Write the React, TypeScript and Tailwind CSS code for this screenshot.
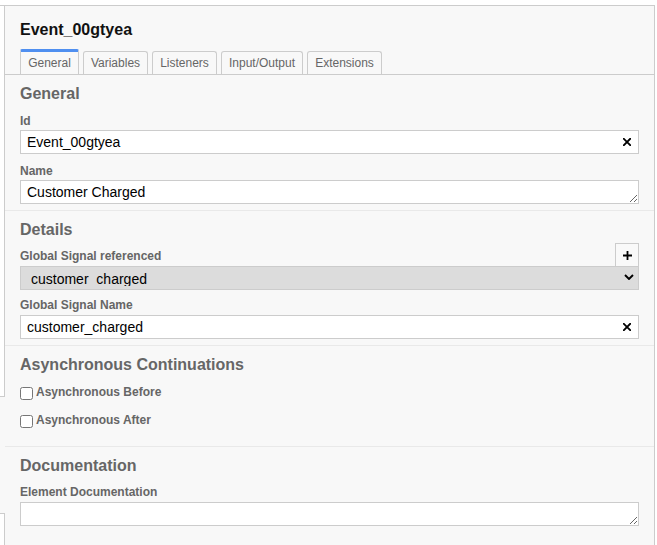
import React from "react";

const Label = ({ children, className = "" }: { children: React.ReactNode; className?: string }) => (
  <div className={"text-[12px] leading-[15px] font-bold text-[#666] " + className}>{children}</div>
);

const GroupTitle = ({ children }: { children: React.ReactNode }) => (
  <div className="text-[16px] leading-[20px] font-bold text-[#666]">{children}</div>
);

const XIcon = () => (
  <svg width="8" height="8" viewBox="0 0 8 8">
    <path d="M0.8 0.8 L7.2 7.2 M7.2 0.8 L0.8 7.2" stroke="#000" strokeWidth="1.9" strokeLinecap="square" />
  </svg>
);

const TextInput = ({ value }: { value: string }) => (
  <div className="relative h-[24px]">
    <input
      readOnly
      value={value}
      className="block w-full h-[24px] border border-[#ccc] bg-white pl-[6px] pr-[28px] text-[14px] text-black outline-none"
    />
    <div className="absolute right-0 top-0 w-[24px] h-[24px] flex items-center justify-center">
      <XIcon />
    </div>
  </div>
);

const TextArea = ({ value }: { value: string }) => (
  <textarea
    readOnly
    value={value}
    rows={1}
    className="block w-full h-[24px] border border-[#ccc] bg-white px-[6px] pt-[3px] pb-0 text-[14px] leading-[16px] text-black outline-none resize-y"
  />
);

const tabs = [
  { name: "General", w: "w-[59px]", active: true },
  { name: "Variables", w: "w-[65px]", active: false },
  { name: "Listeners", w: "w-[65px]", active: false },
  { name: "Input/Output", w: "w-[82px]", active: false },
  { name: "Extensions", w: "w-[75px]", active: false },
];

export default function App() {
  return (
    <div className="w-[657px] h-[545px] bg-white pt-[5px] overflow-hidden font-['Liberation_Sans',Arial,sans-serif]">
      <div className="flex w-[655px] h-[540px] border-t border-[#ccc]">
        {/* left strip (canvas elements peeking) */}
        <div className="w-[5px] flex flex-col bg-[#f8f8f8]">
          <div className="h-[391px] bg-white border-r border-b border-[#ccc]" />
          <div className="flex-1" />
          <div className="h-[32px] bg-white border-t border-r border-[#ccc]" />
        </div>

        {/* properties panel */}
        <div className="flex-1 bg-[#f8f8f8] border-r border-[#ccc] flex flex-col">
          {/* header */}
          <div className="px-[15px] pt-[14px]">
            <div className="text-[16px] leading-[20px] font-bold text-[#111]">Event_00gtyea</div>
          </div>
          <div className="mt-[9px] px-[15px] flex items-end gap-[4px] border-b border-[#ccc]">
            {tabs.map((t) =>
              t.active ? (
                <div
                  key={t.name}
                  className={t.w + " h-[25px] border-t-[3px] border-t-[#4f8ff0] border-x border-x-[#ccc] rounded-t-[2px] text-center text-[12px] leading-[22px] text-[#666]"}
                >
                  {t.name}
                </div>
              ) : (
                <div
                  key={t.name}
                  className={t.w + " h-[23px] border-t border-x border-[#ccc] rounded-t-[3px] text-center text-[12px] leading-[22px] text-[#666]"}
                >
                  {t.name}
                </div>
              )
            )}
          </div>

          {/* General */}
          <div className="px-[15px] pt-[9px] pb-[6px]">
            <GroupTitle>General</GroupTitle>
            <Label className="mt-[10px]">Id</Label>
            <div className="mt-[1px]">
              <TextInput value="Event_00gtyea" />
            </div>
            <Label className="mt-[10px]">Name</Label>
            <div className="mt-[1px]">
              <TextArea value="Customer Charged" />
            </div>
          </div>

          {/* Details */}
          <div className="px-[15px] pt-[9px] pb-[6px] border-t border-[#e9e9e9]">
            <GroupTitle>Details</GroupTitle>
            <div className="relative mt-[9px]">
              <Label>Global Signal referenced</Label>
              <div className="absolute right-0 top-[-6px] w-[24px] h-[24px] border border-[#ccc] bg-[#f9f9f9] flex items-center justify-center z-10">
                <svg width="9" height="9" viewBox="0 0 9 9">
                  <path d="M4.5 0 V9 M0 4.5 H9" stroke="#000" strokeWidth="1.8" />
                </svg>
              </div>
            </div>
            <div className="relative mt-[2px] h-[24px] border border-[#ccc] bg-[#dcdcdc]">
              <div className="h-[19px] overflow-hidden pl-[10px] text-[14px] leading-[24px] text-black">
                customer_charged
              </div>
              <div className="absolute right-0 top-0 w-[18px] h-[22px] flex items-center justify-center pb-[3px]">
                <svg width="10" height="6" viewBox="0 0 10 6">
                  <path d="M1 1 L5 5 L9 1" stroke="#000" strokeWidth="1.9" fill="none" />
                </svg>
              </div>
            </div>
            <Label className="mt-[8px]">Global Signal Name</Label>
            <div className="mt-[2px]">
              <TextInput value="customer_charged" />
            </div>
          </div>

          {/* Asynchronous Continuations */}
          <div className="px-[15px] pt-[9px] pb-[17px] border-t border-[#e9e9e9]">
            <GroupTitle>Asynchronous Continuations</GroupTitle>
            <div className="mt-[10px] flex items-start h-[16px]">
              <input type="checkbox" className="m-0 mt-[2px] mr-[3px] w-[13px] h-[13px]" />
              <Label>Asynchronous Before</Label>
            </div>
            <div className="mt-[12px] flex items-start h-[16px]">
              <input type="checkbox" className="m-0 mt-[2px] mr-[3px] w-[13px] h-[13px]" />
              <Label>Asynchronous After</Label>
            </div>
          </div>

          {/* Documentation */}
          <div className="px-[15px] pt-[9px] border-t border-[#e9e9e9]">
            <GroupTitle>Documentation</GroupTitle>
            <Label className="mt-[9px]">Element Documentation</Label>
            <div className="mt-[2px]">
              <TextArea value="" />
            </div>
          </div>
        </div>
      </div>
    </div>
  );
}
